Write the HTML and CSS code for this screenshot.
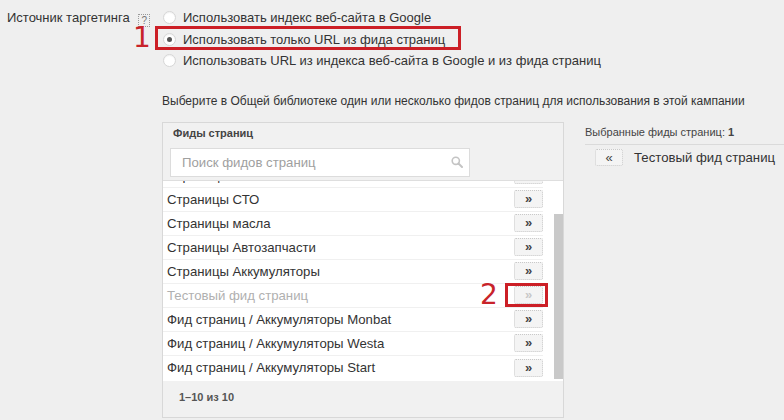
FILE: index.html
```html
<!DOCTYPE html>
<html lang="ru">
<head>
<meta charset="utf-8">
<link rel="stylesheet" href="styles.css">
</head>
<body>
<div class="page">
  <div class="source">
    <div class="source-label">Источник таргетинга <span class="help">?</span></div>
    <div class="radios">
      <div class="radio"><span class="circle"></span>Использовать индекс веб-сайта в Google</div>
      <div class="radio"><span class="circle checked"></span>Использовать только URL из фида страниц</div>
      <div class="radio"><span class="circle"></span>Использовать URL из индекса веб-сайта в Google и из фида страниц</div>
    </div>
  </div>
  <p class="hint">Выберите в Общей библиотеке один или несколько фидов страниц для использования в этой кампании</p>
  <div class="columns">
    <div class="panel">
      <div class="panel-head">
        <div class="panel-title">Фиды страниц</div>
        <div class="search">
          <span class="placeholder">Поиск фидов страниц</span>
          <svg class="search-icon" width="12" height="12" viewBox="0 0 12 12"><circle cx="4.8" cy="4.8" r="3.6" fill="none" stroke="#c4c4c4" stroke-width="1.6"/><path d="M7.5 7.5 L11 11" stroke="#c4c4c4" stroke-width="2" stroke-linecap="round"/></svg>
        </div>
      </div>
      <div class="list">
        <div class="list-inner">
          <div class="item"><span>Страницы шин</span><span class="add">»</span></div>
          <div class="item"><span>Страницы СТО</span><span class="add">»</span></div>
          <div class="item"><span>Страницы масла</span><span class="add">»</span></div>
          <div class="item"><span>Страницы Автозапчасти</span><span class="add">»</span></div>
          <div class="item"><span>Страницы Аккумуляторы</span><span class="add">»</span></div>
          <div class="item disabled"><span>Тестовый фид страниц</span><span class="add">»</span></div>
          <div class="item"><span>Фид страниц / Аккумуляторы Monbat</span><span class="add">»</span></div>
          <div class="item"><span>Фид страниц / Аккумуляторы Westa</span><span class="add">»</span></div>
          <div class="item last"><span>Фид страниц / Аккумуляторы Start</span><span class="add">»</span></div>
        </div>
        <div class="scrollbar"></div>
      </div>
      <div class="panel-foot">1–10 из 10</div>
    </div>
    <div class="selected">
      <div class="selected-title">Выбранные фиды страниц: <b>1</b></div>
      <div class="selected-item"><span class="remove">«</span><span>Тестовый фид страниц</span></div>
    </div>
  </div>
  <div class="mark mark-1"></div>
  <div class="num num-1">1</div>
  <div class="mark mark-2"></div>
  <div class="num num-2">2</div>
</div>
</body>
</html>
```

FILE: styles.css
```css
* { box-sizing: border-box; }
html, body { margin: 0; padding: 0; }
body {
  background: #efefef;
  font-family: "Liberation Sans", Arial, sans-serif;
  color: #333;
  width: 784px;
  height: 420px;
  overflow: hidden;
}
.page { position: relative; width: 784px; height: 420px; }

.source { display: flex; padding-top: 7px; }
.source-label {
  width: 155px;
  padding-left: 7px;
  font-size: 13px;
  line-height: 21px;
  color: #333;
  white-space: nowrap;
}
.help {
  display: inline-block;
  width: 12px;
  height: 13px;
  margin-left: 5px;
  border: 1px dotted #9a9a9a;
  font-size: 10px;
  line-height: 11px;
  text-align: center;
  color: #777;
  vertical-align: -2px;
}
.radios { display: flex; flex-direction: column; padding-left: 8px; }
.radio {
  display: flex;
  align-items: center;
  height: 21.5px;
  font-size: 13px;
  color: #333;
  white-space: nowrap;
}
.circle {
  width: 13px;
  height: 13px;
  border-radius: 50%;
  border: 1px solid #d6d6d6;
  background: #fff;
  margin-right: 7px;
  display: flex;
  align-items: center;
  justify-content: center;
  box-shadow: inset 0 1px 1px rgba(0,0,0,0.06);
}
.circle.checked::after {
  content: "";
  width: 5px;
  height: 5px;
  border-radius: 50%;
  background: #555;
}

.hint {
  margin: 0;
  padding: 22px 0 0 162px;
  font-size: 12px;
  line-height: 14px;
  color: #333;
  height: 46px;
}

.columns { display: flex; gap: 21px; padding-left: 162px; margin-top: 4px; }
.panel {
  flex: none;
  width: 402px;
  height: 296px;
  border: 1px solid #d8d8d8;
  background: #f1f1f1;
  display: flex;
  flex-direction: column;
}
.panel-head {
  padding: 2px 7px 3px;
  border-bottom: 1px solid #dedede;
}
.panel-title {
  font-size: 11px;
  font-weight: bold;
  line-height: 16px;
  color: #444;
  padding-left: 3px;
  margin-bottom: 7px;
}
.search {
  width: 300px;
  height: 29px;
  background: #fff;
  border: 1px solid #dcdcdc;
  display: flex;
  align-items: center;
  justify-content: space-between;
  padding: 0 6px 0 11px;
}
.placeholder { font-size: 13.2px; color: #a0a0a0; }

.list {
  position: relative;
  height: 200px;
  overflow: hidden;
  background: #fff;
}
.list-inner { margin-top: -17px; padding-right: 20px; }
.item {
  display: flex;
  align-items: center;
  justify-content: space-between;
  height: 24px;
  padding-left: 4px;
  border-bottom: 1px solid #f0f0f0;
  font-size: 13.2px;
  color: #333;
  white-space: nowrap;
}
.item.last { border-bottom: none; }
.item.disabled { color: #b0b0b0; }
.add, .remove {
  width: 29px;
  height: 18px;
  border: 1px dotted #c9c9c9;
  border-radius: 2px;
  background: #f4f4f4;
  font-size: 13px;
  font-weight: bold;
  line-height: 15px;
  text-align: center;
  color: #444;
}
.item.disabled .add { color: #c8c8c8; }
.scrollbar {
  position: absolute;
  right: 0;
  top: 33px;
  width: 9px;
  height: 165px;
  background: #c9c9c9;
}
.panel-foot {
  flex: 1;
  padding: 10px 0 0 16px;
  font-size: 11px;
  font-weight: bold;
  color: #555;
}

.selected { flex: 1; min-width: 0; padding-top: 3px; white-space: nowrap; }
.selected-title {
  font-size: 11px;
  color: #444;
  line-height: 14px;
  padding: 0 0 5px 0;
  border-bottom: 1px solid #dadada;
}
.selected-item {
  display: flex;
  align-items: center;
  gap: 11px;
  padding: 4px 0 0 10px;
  font-size: 13.2px;
  color: #333;
}
.remove { flex: none; width: 28px; height: 17px; font-weight: normal; }

.mark {
  position: absolute;
  border: 3px solid #cc1f26;
}
.mark-1 { left: 155px; top: 26px; width: 306px; height: 24px; }
.mark-2 { left: 505px; top: 283px; width: 43px; height: 24px; }
.num {
  position: absolute;
  font-family: "DejaVu Sans", sans-serif;
  font-size: 28px;
  line-height: 24px;
  color: #c8232a;
}
.num-1 { left: 133px; top: 26px; }
.num-2 { left: 480px; top: 283px; }
```
